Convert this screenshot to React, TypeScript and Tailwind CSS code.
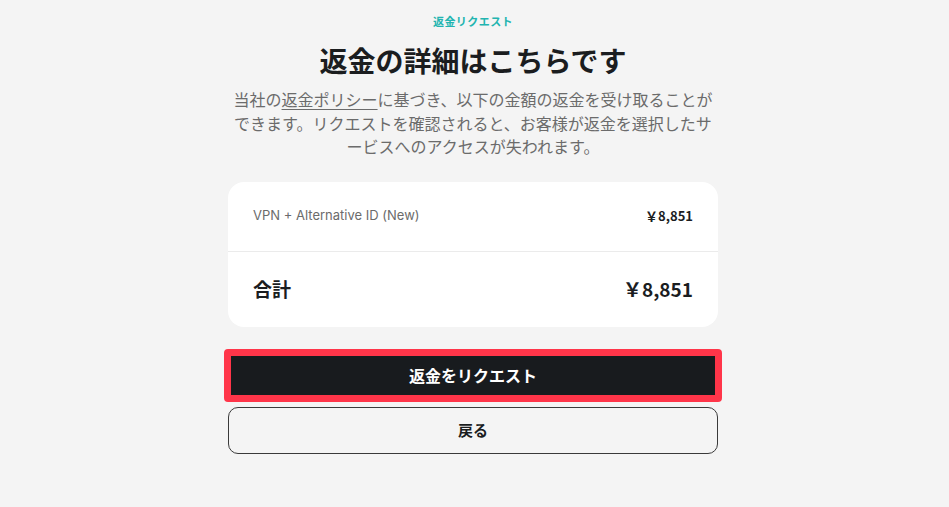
import React from 'react';

const jp = { fontFamily: '"Noto Sans CJK JP", "Noto Sans", sans-serif' };

const RefundDetails: React.FC = () => {
  return (
    <div className="min-h-[507px] w-full bg-[#f4f4f4] text-[#1b1d1f]" style={jp}>
      <div className="flex justify-center pr-[3px]">
        <div className="flex w-[490px] flex-col items-center pt-[13px]">
          <p className="text-[11px] leading-4 font-bold tracking-[0.04em] text-[#22b4b0]">返金リクエスト</p>
          <h1 className="mt-[11px] text-[28px] leading-[40px] font-bold">返金の詳細はこちらです</h1>
          <p className="mt-[8px] w-[490px] text-center text-[16px] leading-[23.5px] text-[#6b6b6b]">
            当社の<span className="underline underline-offset-[3px] decoration-[1px]">返金ポリシー</span>に基づき、以下の金額の返金を受け取ることができます。リクエストを確認されると、お客様が返金を選択したサービスへのアクセスが失われます。
          </p>

          <div className="mt-[23px] w-full rounded-2xl bg-white">
            <div className="flex h-[70px] items-center justify-between border-b border-[#ebebeb] px-[25px]">
              <span className="text-[13px] text-[#6b6b6b]" style={{ fontFamily: 'Inter, "Noto Sans", sans-serif' }}>
                VPN + Alternative ID (New)
              </span>
              <span className="text-[13px] font-bold">￥8,851</span>
            </div>
            <div className="flex h-[75px] items-center justify-between px-[25px]">
              <span className="text-[19px] font-bold">合計</span>
              <span className="text-[19px] font-bold">￥8,851</span>
            </div>
          </div>

          <button className="mt-[22px] h-[53px] w-[498px] rounded-[4px] border-[7px] border-[#ff3549] bg-[#181b1e] text-[16px] font-bold text-white">
            返金をリクエスト
          </button>
          <button className="mt-[5px] h-[47px] w-full rounded-[10px] border border-[#3a3a3a] text-[15px] font-bold text-[#1b1d1f]">
            戻る
          </button>
        </div>
      </div>
    </div>
  );
};

export default RefundDetails;
